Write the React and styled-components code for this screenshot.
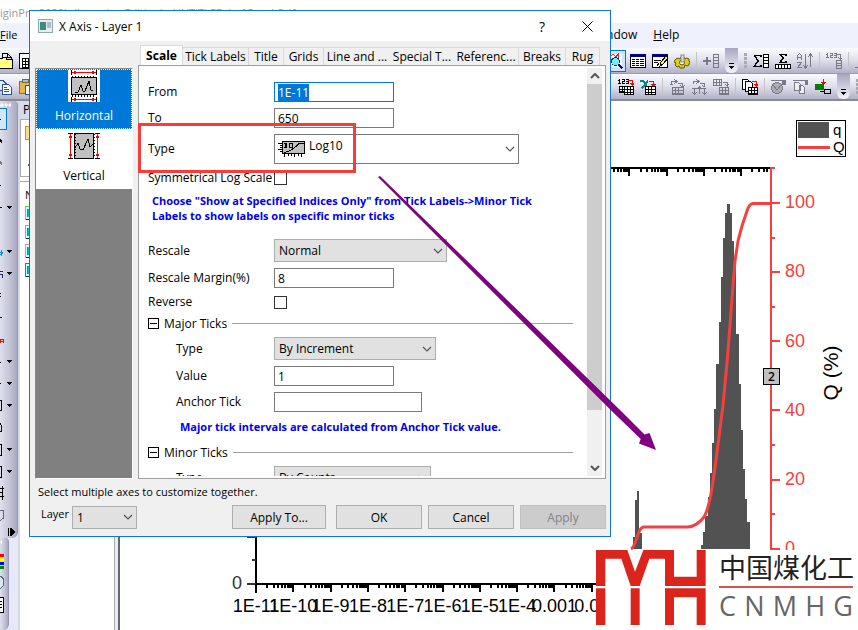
import React, { useEffect, useRef } from "react";
import styled, { createGlobalStyle, css } from "styled-components";

const uiFont = '"Open Sans", "Noto Sans", sans-serif';
const plotFont = '"Liberation Sans", Arial, sans-serif';

const GlobalStyle = createGlobalStyle`
  * { box-sizing: border-box; }
  body { margin: 0; background: #fff; overflow: hidden; }
  body, button, input, select { font-family: ${uiFont}; font-size: 11px; color: #000; }
  svg { display: block; flex: none; }
`;

/* ---------- main window ---------- */

const Desktop = styled.main`
  position: relative;
  display: flex;
  flex-direction: column;
  min-height: 100vh;
  overflow: hidden;
`;
const TitleBar = styled.header`
  height: 23px;
  line-height: 25px;
  color: #999;
  white-space: nowrap;
`;
const MenuBar = styled.nav`
  display: flex;
  height: 25px;
  line-height: 24px;
  background: #eff1fd;
`;
const MenuGroup = styled.div`
  display: flex;
  gap: 16px;
  font-size: ${(p) => (p.$left ? 11 : 12)}px;
  ${(p) => p.$left && "flex: 0 0 592px;"}
`;
const MenuItem = styled.a`
  color: #000;
  text-decoration: none;
`;
const ToolRow = styled.div`
  display: flex;
  height: ${(p) => p.$h}px;
  background: linear-gradient(#fafaff, #e2e2ee 45%, #b2b2c8);
  border-bottom: ${(p) => (p.$last ? "2px solid #8a8a8e" : "1px solid #9a9aae")};
`;
const ToolGroup = styled.div`
  display: flex;
  align-items: center;
  gap: ${(p) => (p.$w ? 3 : 6)}px;
  flex: none;
  width: ${(p) => (p.$w ? p.$w + "px" : "auto")};
`;
const ToolButton = styled.button`
  width: 16px;
  height: 18px;
  padding: 1px 0;
  border: 0;
  background: none;
  ${(p) => p.$active && css`
    width: 26px;
    height: 22px;
    margin: 0 -2px 0 -8px;
    padding: 2px 0 2px 6px;
    border: 1px solid #0078d7;
    background: #cfe4f7;
  `}
`;
const Separator = styled.span`
  width: 1px;
  height: 17px;
  background: #c4c4c4;
`;
const EndCap = styled.span`
  display: flex;
  align-items: flex-end;
  justify-content: center;
  align-self: stretch;
  width: 13px;
  padding-bottom: 4px;
  border-radius: 0 0 6px 6px;
  background: linear-gradient(#a6a6c2, #f4f4fb);
`;
const Grip = styled.span`
  width: 3px;
  height: 16px;
  background: repeating-linear-gradient(#aaa 0 3px, transparent 3px 4px);
`;

const Workspace = styled.div`
  display: flex;
  flex: 1;
`;
const ToolRail = styled.aside`
  display: flex;
  flex-direction: column;
  width: 20px;
  background: #e8e8fb;
  border-right: 2px solid #d8d8e0;
`;
const Rail = styled.div`
  display: flex;
  flex-direction: column;
  width: ${(p) => p.$w}px;
  border-radius: 0 4px 6px 0;
  border-right: 1px solid #9696b4;
  background: linear-gradient(90deg, #dfe0eb, #c6c7d8 50%, #a8a9c2);
  ${(p) => p.$fill && "flex: 1;"}
`;
const RailGrip = styled.span`
  height: 7px;
  margin-right: 6px;
  background: radial-gradient(circle at 2px 4px, #fff 1px, transparent 2px) 0 0 / 4px 7px;
`;
const RailButton = styled.button`
  display: flex;
  align-items: center;
  gap: 1px;
  height: 22px;
  padding: 0;
  border: 0;
  background: none;
  ${(p) => p.$active && css`
    width: 7px;
    border: 1px solid #0078d7;
    border-left: 0;
    background: #d5e7f7;
  `}
`;
const Explorer = styled.aside`
  display: flex;
  flex-direction: column;
  width: 94px;
  background: #fff;
`;
const ExplorerTitle = styled.div`
  height: 18px;
  padding-left: 3px;
  line-height: 18px;
  font-size: 12px;
  background: #d3deec;
`;
const FolderTree = styled.div`
  display: flex;
  flex-direction: column;
  gap: 20px;
  height: 58px;
  padding: 5px 0 0 4px;
  margin-bottom: 4px;
  border: 1px solid #a9a9ad;
  overflow: hidden;
`;
const FileList = styled.div`
  display: flex;
  flex-direction: column;
  flex: 1;
  gap: 4px;
  padding: 5px 0 0 5px;
  border-top: 1px solid #a9a9ad;
`;
const Splitter = styled.div`
  width: 6px;
  background: #e8ebfb;
  border-left: 1px solid #aaa;
  border-right: 2px solid #666;
`;
const GraphPage = styled.section`
  flex: 1;
  min-width: 0;
  svg { width: 100%; height: auto; }
`;

/* ---------- dialog ---------- */

const Dialog = styled.section`
  position: absolute;
  left: 29px;
  top: 10px;
  width: 582px;
  border: 1px solid #1177cc;
  background: #f0f0f0;
`;
const DialogTitle = styled.header`
  display: flex;
  align-items: center;
  gap: 6px;
  height: 30px;
  padding: 0 17px 0 8px;
  background: #fff;
  h1 { flex: 1; margin: 0; font-size: 12px; font-weight: 400; }
`;
const CaptionButton = styled.button`
  display: grid;
  place-items: center;
  width: 12px;
  height: 28px;
  margin-left: 27px;
  padding: 0;
  border: 0;
  background: none;
  font-size: 14px;
`;
const DialogBody = styled.div`
  display: flex;
  gap: 5px;
  padding: 4px 4px 0 5px;
`;
const AxisList = styled.div`
  width: 98px;
  margin-top: 23px;
  border: 1px solid #888;
  border-right-color: #fff;
  border-bottom-color: #fff;
  background: #808080;
`;
const AxisItem = styled.button`
  display: flex;
  flex-direction: column;
  align-items: center;
  justify-content: space-between;
  width: 100%;
  height: 60px;
  padding: 0 0 4px;
  font-size: 12px;
  line-height: 16px;
  border: 1px dotted ${(p) => (p.$selected ? "#fff" : "transparent")};
  background: ${(p) => (p.$selected ? "#0078d7" : "#fff")};
  color: ${(p) => (p.$selected ? "#fff" : "#000")};
`;
const TabArea = styled.div`
  flex: 1;
  min-width: 0;
`;
const TabStrip = styled.div`
  display: flex;
  align-items: flex-end;
  height: 20px;
  padding: 0 6px 0 2px;
`;
const Tab = styled.button`
  width: ${(p) => p.$w}px;
  height: 18px;
  padding: 0;
  border: solid #d9d9d9;
  border-width: 1px ${(p) => (p.$edge ? 1 : 0)}px 0 0;
  background: #f0f0f0;
  font-size: 12px;
  line-height: 16px;
  white-space: nowrap;
  ${(p) => p.$active && css`
    height: 20px;
    border-left-width: 1px;
    background: #fff;
    font-weight: 700;
  `}
`;
const TabPanel = styled.div`
  display: flex;
  height: 414px;
  padding: 2px 3px 2px 1px;
  border: 1px solid #a0a0a0;
  background: #fcfcfe;
`;
const FormArea = styled.form`
  display: flex;
  flex-direction: column;
  flex: 1;
  gap: 6px;
  padding: 14px 14px 0 8px;
  overflow: hidden;
  background: #fff;
`;
const Field = styled.div`
  display: grid;
  grid-template-columns: 126px 1fr;
  align-items: center;
  flex: none;
  height: ${(p) => p.$h || 20}px;
  label {
    padding-left: ${(p) => (p.$nested ? 28 : 0)}px;
    font-size: 12px;
    line-height: 16px;
    white-space: nowrap;
  }
`;
const TextBox = styled.input`
  width: ${(p) => p.$w || 120}px;
  height: 20px;
  padding: 0 3px;
  border: 1px solid #7a7a7a;
  border-radius: 0;
  outline: 0;
  background: #fff;
  font-size: 12px;
  &:focus { border-color: #0078d7; }
  &::selection { background: #0078d7; color: #fff; }
`;
const CheckBox = styled.input.attrs({ type: "checkbox" })`
  appearance: none;
  width: 13px;
  height: 13px;
  margin: 0;
  border: 1px solid #333;
  background: #fff;
`;
const SelectFrame = styled.span`
  position: relative;
  display: block;
  flex: none;
  width: ${(p) => p.$w}px;
  height: ${(p) => p.$h || 23}px;
  select {
    appearance: none;
    width: 100%;
    height: 100%;
    padding: 0 20px 0 4px;
    border: 1px solid #adadad;
    border-radius: 0;
    outline: 0;
    background: #e1e1e1;
    font-size: 12px;
    ${(p) => p.$rich && css`
      padding: 0 20px 8px 34px;
      border-color: #7a7a7a;
      background: #fff;
    `}
  }
`;
const SelectArrow = styled.span`
  position: absolute;
  right: 4px;
  top: 50%;
  margin-top: -3px;
  pointer-events: none;
`;
const SelectPicture = styled.span`
  position: absolute;
  left: 4px;
  top: 6px;
  pointer-events: none;
`;
const Note = styled.p`
  flex: none;
  margin: 0;
  padding: ${(p) => p.$pad};
  color: #0000f0;
  font-weight: 700;
  line-height: 15px;
`;
const SectionHead = styled.div`
  display: flex;
  align-items: center;
  gap: 5px;
  flex: none;
  height: 15px;
  margin-top: ${(p) => p.$top || 0}px;
  font-size: 12px;
  &::after { content: ""; flex: 1; height: 1px; background: #a0a0a0; }
`;
const Expander = styled.button`
  display: grid;
  place-items: center;
  width: 11px;
  height: 11px;
  padding: 0;
  border: 1px solid #000;
  background: #fff;
`;
const ScrollBar = styled.div`
  display: flex;
  flex-direction: column;
  align-items: center;
  width: 15px;
  background: #f0f0f0;
`;
const ScrollButton = styled.button`
  display: grid;
  place-items: center;
  width: 15px;
  height: 16px;
  padding: 0;
  border: 0;
  background: none;
`;
const ScrollThumb = styled.span`
  width: 100%;
  height: 326px;
  margin-bottom: auto;
  background: #cdcdcd;
`;
const Hint = styled.p`
  margin: 0;
  padding: 3px 8px 0;
  line-height: 19px;
`;
const DialogFooter = styled.footer`
  display: flex;
  align-items: center;
  gap: 6px;
  height: 35px;
  padding: 0 4px 3px 11px;
`;
const LayerPicker = styled.div`
  display: flex;
  gap: 3px;
  margin-right: auto;
  label { font-size: 11px; line-height: 16px; }
`;
const PushButton = styled.button`
  width: ${(p) => p.$w || 86}px;
  height: 24px;
  padding: 0;
  border: 1px solid #adadad;
  background: #e1e1e1;
  font-size: 12px;
  &:disabled { background: #ccc; border-color: #bfbfbf; color: #838383; }
  &:first-of-type { margin-right: 4px; }
`;

/* ---------- overlays ---------- */

const HighlightFrame = styled.div`
  position: absolute;
  left: 138px;
  top: 123px;
  width: 218px;
  height: 50px;
  border: 3px solid #fb3a3a;
  pointer-events: none;
`;
const ArrowLayer = styled.svg`
  position: absolute;
  left: 370px;
  top: 170px;
  pointer-events: none;
`;
const Watermark = styled.div`
  position: absolute;
  left: 596px;
  top: 550px;
  right: 0;
  display: flex;
  gap: 13px;
  height: 80px;
  background: #fff;
`;
const WatermarkText = styled.div`
  width: 134px;
  flex: none;
`;
const WatermarkName = styled.div`
  height: 38px;
  border-bottom: 2px solid #d9534f;
  font: 27px/34px "Noto Sans CJK SC", sans-serif;
  color: #222;
  white-space: nowrap;
`;
const WatermarkLatin = styled.div`
  display: flex;
  justify-content: space-between;
  font: 27px/36px "Open Sans", sans-serif;
  color: #666;
`;

/* ---------- icons ---------- */

const Px = ({ children, w = 16, h = 16, ...rest }) => (
  <svg width={w} height={h} viewBox={`0 0 ${w} ${h}`} shapeRendering="crispEdges" fill="none" stroke="#000" {...rest}>
    {children}
  </svg>
);
const Caret = ({ bar }) => (
  <Px w={5} h={bar ? 6 : 3} stroke="none">
    {bar && <path d="M0 0h5v1H0z" fill="#000" />}
    <path d={bar ? "M0 3h5L2.5 6z" : "M0 0h5L2.5 3z"} fill="#000" />
  </Px>
);
const Chevron = ({ d = "M1 1l4 4 4-4", heavy }) => (
  <svg width="10" height="6" viewBox="0 0 10 6" fill="none" stroke="#555" strokeWidth={heavy ? 2 : 1.2}><path d={d} /></svg>
);
const Table = ({ x = 0, y = 0, w = 10, h = 10, c = "#000" }) => (
  <g stroke={c}>
    <rect x={x + 0.5} y={y + 0.5} width={w - 1} height={h - 1} fill={c === "#000" ? "#fff" : "none"} />
    <path d={`M${x} ${y + 3.5}h${w}M${x} ${y + 6.5}h${w}M${x + 3.5} ${y}v${h}M${x + 6.5} ${y}v${h}`} />
  </g>
);
const RedDrop = ({ x, y, c = "#f00" }) => (
  <g><path d={`M${x} ${y + 0.5}h4.5v4`} stroke={c} /><path d={`M${x + 2} ${y + 3}h5l-2.5 3z`} fill={c} stroke="none" /></g>
);
const Digits = ({ c = "#000" }) => (
  <path stroke={c} d="M1.5 0v5M0 1.5h1M0 4.5h3M4 .5h2.5v2H4.500v2H7M8 .5h2.500v4H8M8 2.500h2" />
);
const gray = "#777988";

const icons = {
  open: <Px><path d="M-2 15.500V5.500h4l1-1h3l1 2h5v9z" fill="#ffff80" /><path d="M2.500 4V.5h5l4 4v2M7.500 0v4.500h4" /></Px>,
  book: <Px><rect x=".5" y=".5" width="15" height="15" fill="#fff" /><Table x={3} y={5} w={10} h={10} /></Px>,
  copy: <Px stroke="#27539b"><path d="M-4 1.500h7l3 3v7h-10z" fill="#dfeaff" /><path d="M2.500 5.500h6l3 3v7h-9z" fill="#fff" /><path d="M4 8.500h3M4 10.500h5M4 12.500h5" /></Px>,
  paste: <Px><rect x=".5" y="2.500" width="12" height="12" fill="#e8b544" stroke="#9b6d16" /><rect x="3.500" y=".5" width="6" height="3" fill="#bbb" stroke="#666" /><rect x="6.500" y="6.500" width="9" height="9" fill="#fff" stroke="#27539b" /></Px>,
  zoomGraph: <Px><rect x="0" y="1" width="15" height="13" fill="#fff" stroke="none" /><path d="M0 13V9l3-5 3-3 3 3 2-3v6" stroke="#e22" /><circle cx="8.500" cy="8.500" r="4" fill="#7fe9f2" stroke="#135" /><path d="M11.500 11.500l4 4" stroke="#00a" strokeWidth="2" /></Px>,
  list: <Px><rect x=".5" y="1.500" width="15" height="13" fill="#fff" /><path d="M0 2.500h16" stroke="#000080" strokeWidth="3" /><path d="M2 6.500h3m1 0h3m1 0h4M2 8.500h3m1 0h3m1 0h4M2 10.500h3m1 0h3m1 0h4M2 12.500h3m1 0h3m1 0h4" /></Px>,
  edit: <Px><rect x=".5" y="1.500" width="15" height="13" fill="#fff" /><path d="M0 2.500h16" stroke="#000080" strokeWidth="3" /><path d="M2 7.500h7M2 9.500h4M5 12.500l2-2" /><path d="M8 13l1-4 5-6 2 2-5 6z" fill="#ff0" /></Px>,
  gear: <Px stroke="#5c5200" shapeRendering="auto"><path d="M2 6l2-1 2 1 1-2h3l1 2 2-1 2 1v2l1 1-1 2v1l-2 1-2-1-1 3H6l-1-2-2 1-2-2 1-2-2-1 1-2z" fill="#e0cf1a" /><circle cx="8" cy="9.500" r="2.500" fill="#fff" /><rect x="7" y="2" width="3" height="7" fill="#ddd" stroke="#888" /></Px>,
  addCol: <Px stroke={gray}><path d="M0 8h8M4 4v8" strokeWidth="2" /><path d="M10.500 1.500h5v13h-5zM10 4.500h6M10 7.500h6M10 10.500h6" /></Px>,
  sumCol: <Px><path d="M8 4V2.500H1.500L5 8l-4 5.500h7V12" strokeWidth="1.500" /><path d="M10.500 1.500h5v13h-5zM10 4.500h6M10 7.500h6M10 10.500h6" fill="#fff" /></Px>,
  sumRow: <Px><path d="M11 3V1.500H5L8 5 5 9.500h6V8" strokeWidth="1.500" /><path d="M.5 11.500h15v4H.500zM3.500 11v5M6.500 11v5M9.500 11v5M12.500 11v5" fill="#fff" /></Px>,
  sort: <Px stroke={gray}><path d="M.5 7V2.500l2-2 2 2V7M1 4.500h3M0 9.500h4.500L.5 14.500H5M8.500 1v13M6 12l2.500 3 2.500-3M13.500 2v12M11 4l2.500-3 2.500 3" /></Px>,
  numCol: <Px stroke={gray}><Digits c={gray} /><path d="M11 1.500h3.500v4M12 4l2.500 2L17 4M10.500 7.500h5v8h-5zM10 10.500h6M10 12.500h6" /></Px>,
  steps: <Px stroke={gray}><path d="M0 14.500h5v-5h4v-5h5" /></Px>,
  digitTable: <Px><Digits /><RedDrop x={10} y={1} /><Table x={1} y={7} w={9} h={6} /><Table x={6} y={7} w={10} h={9} /></Px>,
  excel: <Px><path d="M0 1.500h3l5 8M8 1.500l-6 8" stroke="#088" strokeWidth="2" /><RedDrop x={9} y={2} /><Table x={5} y={7} w={11} h={9} /></Px>,
  refresh: <Px stroke={gray}><path d="M2 5V2.500h6M5 0l3 2.500L5 5M1 5.500h3M9 4.500h4v2M11 6l2.500 2L16 6" /><Table x={3} y={8} w={12} h={8} c={gray} /></Px>,
  refreshArrows: <Px stroke={gray}><path d="M2 5V2.500h6M5 0l3 2.500L5 5M9 4.500h4v2M11 6l2.500 2M3.500 9v6M1 13l2.500 2L6 13M8.500 15V8M6 10l2.500-2L11 10M13.500 9v6M11 13l2.500 2L16 13M1 9.500h14" /></Px>,
  tableDown: <Px stroke={gray}><Table x={0} y={0} w={9} h={7} c={gray} /><path d="M10 3.500h4v3M12 5l2.500 2L16 5" /><Table x={6} y={8} w={10} h={8} c={gray} /></Px>,
  sheets: <Px><path d="M.5 .5h5l2 2v8h-7z" fill="#fff" /><path d="M3.500 2.500h5l2 2v8h-7z" fill="#fff" /><RedDrop x={10} y={2} /><Table x={6} y={8} w={10} h={8} /></Px>,
  disk: <Px stroke={gray}><circle cx="6" cy="9" r="5.500" fill="#a9abb5" /><path d="M2 6l4 5 4-5M0 1.500h12v4" /><rect x="11" y="1" width="3" height="4" fill={gray} /></Px>,
  pages: <Px stroke={gray}><path d="M0 1.500h13v3" /><path d="M1.500 3.500h4l2 2v6h-6zM6.500 6.500h3l2 2v6h-5z" fill="#eee" /><rect x="12" y="1" width="2" height="4" /></Px>,
  connect: <Px><path d="M0 5h9v6H0z" fill="#087a08" stroke="none" /><path d="M8.500 0v4" stroke="#f00" /><path d="M6 3h5L8.500 6z" fill="#f00" stroke="none" /><path d="M5 12.500h5M9.500 10v5M10 10.500h5v4h-5" /></Px>,
  partial: <Px><RedDrop x={8} y={1} /><Table x={6} y={7} w={9} h={9} /></Px>,
};

const railIcons = [
  { d: "M0 7h1", active: true }, { d: "M0 5l2 3M0 6l2 3" }, { d: "M0 5l2 3M0 6l2 3", c: "#777" }, { d: "M0 7h1" },
  { d: "M0 7h2", menu: true }, null, { d: "M0 8h3M0 11l3-2M1 6v6", c: "#088de0", menu: true },
  { d: "M0 5h3M0 8h2l1 4", c: "#226", menu: true }, { d: "M0 5h1M0 8h1" }, { d: "M0 7h2" },
  { d: "M.5 11V7.500h3V11M1 9.500h2", c: "#f00" }, { d: "M0 8h1", menu: true }, { d: "M0 7h1", menu: true },
  { d: "M0 2.500h1.500v10H0", menu: true }, { d: "M0 3.500l1.500 2v6H0" }, { d: "M0 2.500h1.500v11H0", menu: true },
  { d: "M0 2.500h1.500v11H0", menu: true }, { d: "M0 2.500h4M0 6.500h3M0 10.500h4M2.500 0v14" }, { d: "M0 2h3.500v8L0 13", c: "#667" },
];

/* ---------- graph ---------- */

const DECADE = 37.3;
function decadePath(start, count, y, major, minor, from, to) {
  let d = "";
  for (let i = 0; i < count; i++) {
    for (let k = 1; k < 10; k++) {
      const x = start + (i + Math.log10(k)) * DECADE;
      if (x >= from && x <= to) d += `M${x} ${y}v${k === 1 ? major : minor}`;
    }
  }
  return d;
}
const xLabels = ["1E-11", "1E-10", "1E-9", "1E-8", "1E-7", "1E-6", "1E-5", "1E-4", "0.001", "0.01"];

function Graph() {
  return (
    <svg viewBox="120 101 738 529" fontFamily={plotFont} fontSize="18" role="img" aria-label="Particle distribution graph">
      <g fill="none" stroke="#000" strokeWidth="2" shapeRendering="crispEdges">
        <path d="M600 168H772" />
        <path d={decadePath(592, 5, 168, 8, 4, 600, 770)} />
        <path d="M256 584H600M256 530V593" />
        <path d="M247 584h9M252 560h4M247 537h9" stroke="#333" />
        <path d={decadePath(256, 10, 584, 8, 4, 256, 600)} />
      </g>
      <path fill="#525252" shapeRendering="crispEdges" d="M633 549V537H635V500H637V491H639V533H642V549ZM701 549V545H703V532H705V516H708V497H710V473H712V443H714V409H716V364H719V322H721V277H723V238H725V213H727V204H730V213H732V241H734V261H736V334H739V384H741V430H743V469H745V499H747V522H750V549Z" />
      <path fill="none" stroke="#f54040" strokeWidth="3" d="M631 549C635 547 637 536 639 532Q641 527 644 527H688C697 526 701 521 704 517C710 507 713 482 716 460L723 405L727 363L730 325L733 285L735 261L738 241L742 226L747 211Q749 204 753 203.500H771" />
      <path fill="none" stroke="#f54040" strokeWidth="2" shapeRendering="crispEdges" d="M771 167V550M771 168h4M771 203h9M771 238h4M771 272h9M771 307h4M771 341h9M771 376h4M771 410h9M771 445h4M771 480h9M771 514h4M771 549h9" />
      <g fill="#f54040">
        <text x="785" y="208">100</text><text x="785" y="277">80</text><text x="785" y="347">60</text>
        <text x="785" y="416">40</text><text x="785" y="485">20</text><text x="785" y="554">0</text>
      </g>
      <text x="232" y="589" fill="#333">0</text>
      <g textAnchor="middle">
        {xLabels.map((t, i) => <text key={t} x={256 + i * DECADE} y="612">{t}</text>)}
      </g>
      <text fontSize="21" textAnchor="middle" transform="translate(838 373) rotate(-90)">Q (%)</text>
      <g shapeRendering="crispEdges">
        <rect x="763.5" y="368.5" width="16" height="16" fill="#c0c0c0" stroke="#000" />
        <rect x="796.5" y="120.500" width="49" height="36" fill="#fff" stroke="#000" />
        <rect x="798" y="122" width="31" height="16" fill="#525252" />
        <path d="M798 147.500h32" stroke="#f54040" strokeWidth="3" />
      </g>
      <text x="771.5" y="381" fontSize="12" fontWeight="600" textAnchor="middle" fontFamily={uiFont}>2</text>
      <text x="833" y="135" fontSize="15">q</text>
      <text x="833" y="152" fontSize="15">Q</text>
    </svg>
  );
}

const AxisPicture = ({ vertical }) => (
  <Px w={32} h={32}>
    {!vertical && <rect width="32" height="32" fill="#fff" stroke="none" />}
    <g transform={vertical ? "rotate(90 16 16)" : undefined}>
      <rect x="3.500" y={vertical ? 6.500 : 7.500} width="25" height={vertical ? 19 : 17} fill="#c0c0c0" />
      <path d="M4 6.500h24" strokeDasharray="1 2" strokeWidth="2" />
      <path d="M4 25.500h24" strokeDasharray="1 2" strokeWidth="2" />
      <path d="M3.500 0v5M28.500 0v5M3.500 27v5M28.500 27v5" />
      <path d="M5 2.500h22M5 29.500h22" stroke="#f00" />
      <path d="M4 2.500l4-2v4zM28 2.500l-4-2v4zM4 29.500l4-2v4zM28 29.500l-4-2v4z" fill="#f00" stroke="none" />
    </g>
    <path d={vertical ? "M7 18l3-5 2 6 3 1 5-11 2 8 3-3" : "M7 22h3l3-7 2 6h2l4-10 2 9h2"} />
  </Px>
);
const LogPicture = () => (
  <Px w={28} h={17}>
    <rect x="4.500" y="1.500" width="22" height="12" fill="#c0c0c0" />
    <path d="M0 3.500h4M2 5.500h2M2 7.500h2M0 9.500h4M2 11.500h2M6.500 14v3M10.500 14v2M13.500 14v2M16.500 14v3M20.500 14v2M23.500 14v3" />
    <path d="M6 3.500h3M6 7.500h3M11.500 3v5M14.500 3v5M11 3.500h4M11 7.500h4M6 12.500l4-1 4-2 4-3 3-3h5" />
    <path d="M8 3v5" strokeWidth="2" />
  </Px>
);

function Select({ id, w, h, rich, value }) {
  return (
    <SelectFrame $w={w} $h={h} $rich={rich}>
      <select id={id} defaultValue={value}><option>{value}</option></select>
      {rich && <SelectPicture><LogPicture /></SelectPicture>}
      <SelectArrow><Chevron /></SelectArrow>
    </SelectFrame>
  );
}
const Minus = () => <Px w={7} h={1}><path d="M0 .5h7" /></Px>;
const tabs = [["Scale", 43], ["Tick Labels", 66], ["Title", 35], ["Grids", 40], ["Line and ...", 66], ["Special T...", 64], ["Referenc...", 65], ["Breaks", 47], ["Rug", 34]];

function AxisDialog() {
  const from = useRef(null);
  useEffect(() => {
    from.current.focus({ preventScroll: true });
    from.current.select();
  }, []);
  return (
    <Dialog role="dialog" aria-labelledby="dialog-title">
      <DialogTitle>
        <Px w={15} h={14}><rect x=".5" y=".5" width="14" height="13" fill="#e8eef0" stroke="#8aa" /><rect x="2" y="3" width="6" height="8" fill="#3f8a80" stroke="none" /><rect x="9" y="3" width="4" height="6" fill="#a9bcc8" stroke="none" /></Px>
        <h1 id="dialog-title">X Axis - Layer 1</h1>
        <CaptionButton aria-label="Help">?</CaptionButton>
        <CaptionButton aria-label="Close">
          <svg width="11" height="11" viewBox="0 0 11 11" stroke="#000"><path d="M.5 .5l10 10M10.500 .5l-10 10" /></svg>
        </CaptionButton>
      </DialogTitle>
      <DialogBody>
        <AxisList>
          <AxisItem $selected><AxisPicture />Horizontal</AxisItem>
          <AxisItem><AxisPicture vertical />Vertical</AxisItem>
        </AxisList>
        <TabArea>
          <TabStrip role="tablist">
            {tabs.map(([t, w], i) => (
              <Tab key={t} role="tab" aria-selected={i === 0} $w={w} $active={i === 0} $edge={![4, 5].includes(i)}>{t}</Tab>
            ))}
          </TabStrip>
          <TabPanel role="tabpanel">
            <FormArea>
              <Field><label htmlFor="from">From</label><TextBox id="from" ref={from} defaultValue="1E-11" /></Field>
              <Field><label htmlFor="to">To</label><TextBox id="to" defaultValue="650" /></Field>
              <Field $h={30}><label htmlFor="type">Type</label><Select id="type" w={245} h={30} rich value="Log10" /></Field>
              <Field $h={16}><label htmlFor="symlog">Symmetrical Log Scale</label><CheckBox id="symlog" /></Field>
              <Note $pad="1px 0 10px 4px">
                Choose "Show at Specified Indices Only" from Tick Labels-&gt;Minor Tick<br />Labels to show labels on specific minor ticks
              </Note>
              <Field $h={23}><label htmlFor="rescale">Rescale</label><Select id="rescale" w={173} value="Normal" /></Field>
              <Field><label htmlFor="margin">Rescale Margin(%)</label><TextBox id="margin" defaultValue="8" /></Field>
              <Field $h={16}><label htmlFor="reverse">Reverse</label><CheckBox id="reverse" /></Field>
              <SectionHead><Expander type="button" aria-label="Collapse Major Ticks"><Minus /></Expander>Major Ticks</SectionHead>
              <Field $h={23} $nested><label htmlFor="mtype">Type</label><Select id="mtype" w={162} value="By Increment" /></Field>
              <Field $nested><label htmlFor="mvalue">Value</label><TextBox id="mvalue" defaultValue="1" /></Field>
              <Field $nested><label htmlFor="anchor">Anchor Tick</label><TextBox id="anchor" $w={148} /></Field>
              <Note $pad="1px 0 1px 32px">Major tick intervals are calculated from Anchor Tick value.</Note>
              <SectionHead $top={4}><Expander type="button" aria-label="Collapse Minor Ticks"><Minus /></Expander>Minor Ticks</SectionHead>
              <Field $h={23} $nested><label htmlFor="ntype">Type</label><Select id="ntype" w={157} value="By Counts" /></Field>
            </FormArea>
            <ScrollBar>
              <ScrollButton aria-label="Scroll up"><Chevron heavy d="M1 5l4-4 4 4" /></ScrollButton>
              <ScrollThumb />
              <ScrollButton aria-label="Scroll down"><Chevron heavy /></ScrollButton>
            </ScrollBar>
          </TabPanel>
        </TabArea>
      </DialogBody>
      <Hint>Select multiple axes to customize together.</Hint>
      <DialogFooter>
        <LayerPicker>
          <label htmlFor="layer">Layer</label>
          <Select id="layer" w={65} value="1" />
        </LayerPicker>
        <PushButton $w={94}>Apply To...</PushButton>
        <PushButton>OK</PushButton>
        <PushButton>Cancel</PushButton>
        <PushButton disabled>Apply</PushButton>
      </DialogFooter>
    </Dialog>
  );
}

const Tool = ({ name, active }) => <ToolButton aria-label={name} $active={active}>{icons[name]}</ToolButton>;

export default function App() {
  return (
    <Desktop>
      <GlobalStyle />
      <TitleBar>iginPro 2020b (Learning Edition) - UNTITLED * - [Graph3 *]</TitleBar>
      <MenuBar>
        <MenuGroup $left><MenuItem href="#file"><u>F</u>ile</MenuItem></MenuGroup>
        <MenuGroup><MenuItem href="#window"><u>W</u>indow</MenuItem><MenuItem href="#help"><u>H</u>elp</MenuItem></MenuGroup>
      </MenuBar>
      <ToolRow $h={26}>
        <ToolGroup $w={608}><Tool name="open" /><Tool name="book" /></ToolGroup>
        <ToolGroup>
          <Tool name="zoomGraph" active /><Tool name="list" /><Tool name="edit" /><Tool name="gear" />
          <Separator /><Tool name="addCol" /><EndCap><Caret bar /></EndCap>
          <Grip /><Tool name="sumCol" /><Tool name="sumRow" /><Tool name="sort" />
          <Separator /><Tool name="numCol" /><Separator /><Tool name="steps" />
        </ToolGroup>
      </ToolRow>
      <ToolRow $h={27} $last>
        <ToolGroup $w={596}><Tool name="copy" /><Tool name="paste" /></ToolGroup>
        <ToolGroup>
          <Tool name="partial" /><Tool name="digitTable" /><Tool name="excel" />
          <Separator /><Tool name="refresh" /><Tool name="refreshArrows" /><Tool name="tableDown" />
          <Separator /><Tool name="sheets" /><Separator /><Tool name="disk" /><Tool name="pages" /><Tool name="connect" />
          <EndCap><Caret bar /></EndCap><Grip />
        </ToolGroup>
      </ToolRow>
      <Workspace>
        <ToolRail>
          <Rail $w={18}>
            <RailGrip />
            {railIcons.map((r, i) => (
              <RailButton key={i} aria-label={`Tool ${i + 1}`} $active={r?.active}>
                <Px w={6} h={14}>{r && <path d={r.d} stroke={r.c || "#000"} />}</Px>
                {r?.menu && <Caret />}
              </RailButton>
            ))}
            <Px w={17} h={12}><path d="M8.500 2v8M10.500 2v8" /><path d="M11 2l4 4-4 4z" fill="#000" stroke="none" /></Px>
          </Rail>
          <Rail $w={9} $fill>
            <RailGrip />
            <Px w={8} h={80} stroke="none">
              <path d="M0 9h4v3H0z" fill="#f00" /><path d="M0 13h4v3H0z" fill="#ff0" /><path d="M0 17h4v3H0z" fill="#00f" /><path d="M0 21h4v3H0z" fill="#080" />
              <path d="M0 31q4 2 4 6t-4 7" fill="#dde6ee" stroke="#567" />
              <path d="M0 52.500h3.500v15H0M0 56.500h2M0 59.500h2M0 62.500h2" stroke="#000" fill="#fff" />
            </Px>
          </Rail>
        </ToolRail>
        <Explorer>
          <ExplorerTitle>P</ExplorerTitle>
          <FolderTree>
            <Px><path d="M.5 1.500h7v2h8v11H.500z" fill="#f3dc8b" stroke="#b89a3c" /></Px>
            <Px h={8}><path d="M2 4l4-4v8z" fill="#555" stroke="none" /></Px>
          </FolderTree>
          <FileList>
            <span>N</span>
            {["#5bd84a", "#c99", "#c99", "#f0f"].map((c, i) => (
              <Px key={i} h={15}><rect x=".5" y=".5" width="14" height="13" fill="#dff" stroke={c} /><path d="M2.500 3v8" stroke="#e33" /><path d="M3.500 3v8" stroke="#0bc" /><path d="M1 13.500h14" stroke="#033" /></Px>
            ))}
          </FileList>
        </Explorer>
        <Splitter />
        <GraphPage><Graph /></GraphPage>
      </Workspace>
      <AxisDialog />
      <HighlightFrame />
      <ArrowLayer width="290" height="284" viewBox="370 170 290 284">
        <path fill="#800080" d="M378 177L380 176L620 410L644.500 434.500L649.500 433L656 450L639 443.500L640.700 439L610.700 410Z" />
      </ArrowLayer>
      <Watermark>
        <svg width="110" height="75" viewBox="18 420 330 225" fill="#da251d">
          <path d="M18 420H112L135 485L160 420H252V500H320V420H347V528H225V446H178L149 528H122L94 446H46V528H18Z" />
          <path d="M18 535H46V645H18ZM122 535H149V645H122ZM225 535H347V645H320V562H252V645H225Z" />
        </svg>
        <WatermarkText>
          <WatermarkName lang="zh">中国煤化工</WatermarkName>
          <WatermarkLatin><span>C</span><span>N</span><span>M</span><span>H</span><span>G</span></WatermarkLatin>
        </WatermarkText>
      </Watermark>
    </Desktop>
  );
}
